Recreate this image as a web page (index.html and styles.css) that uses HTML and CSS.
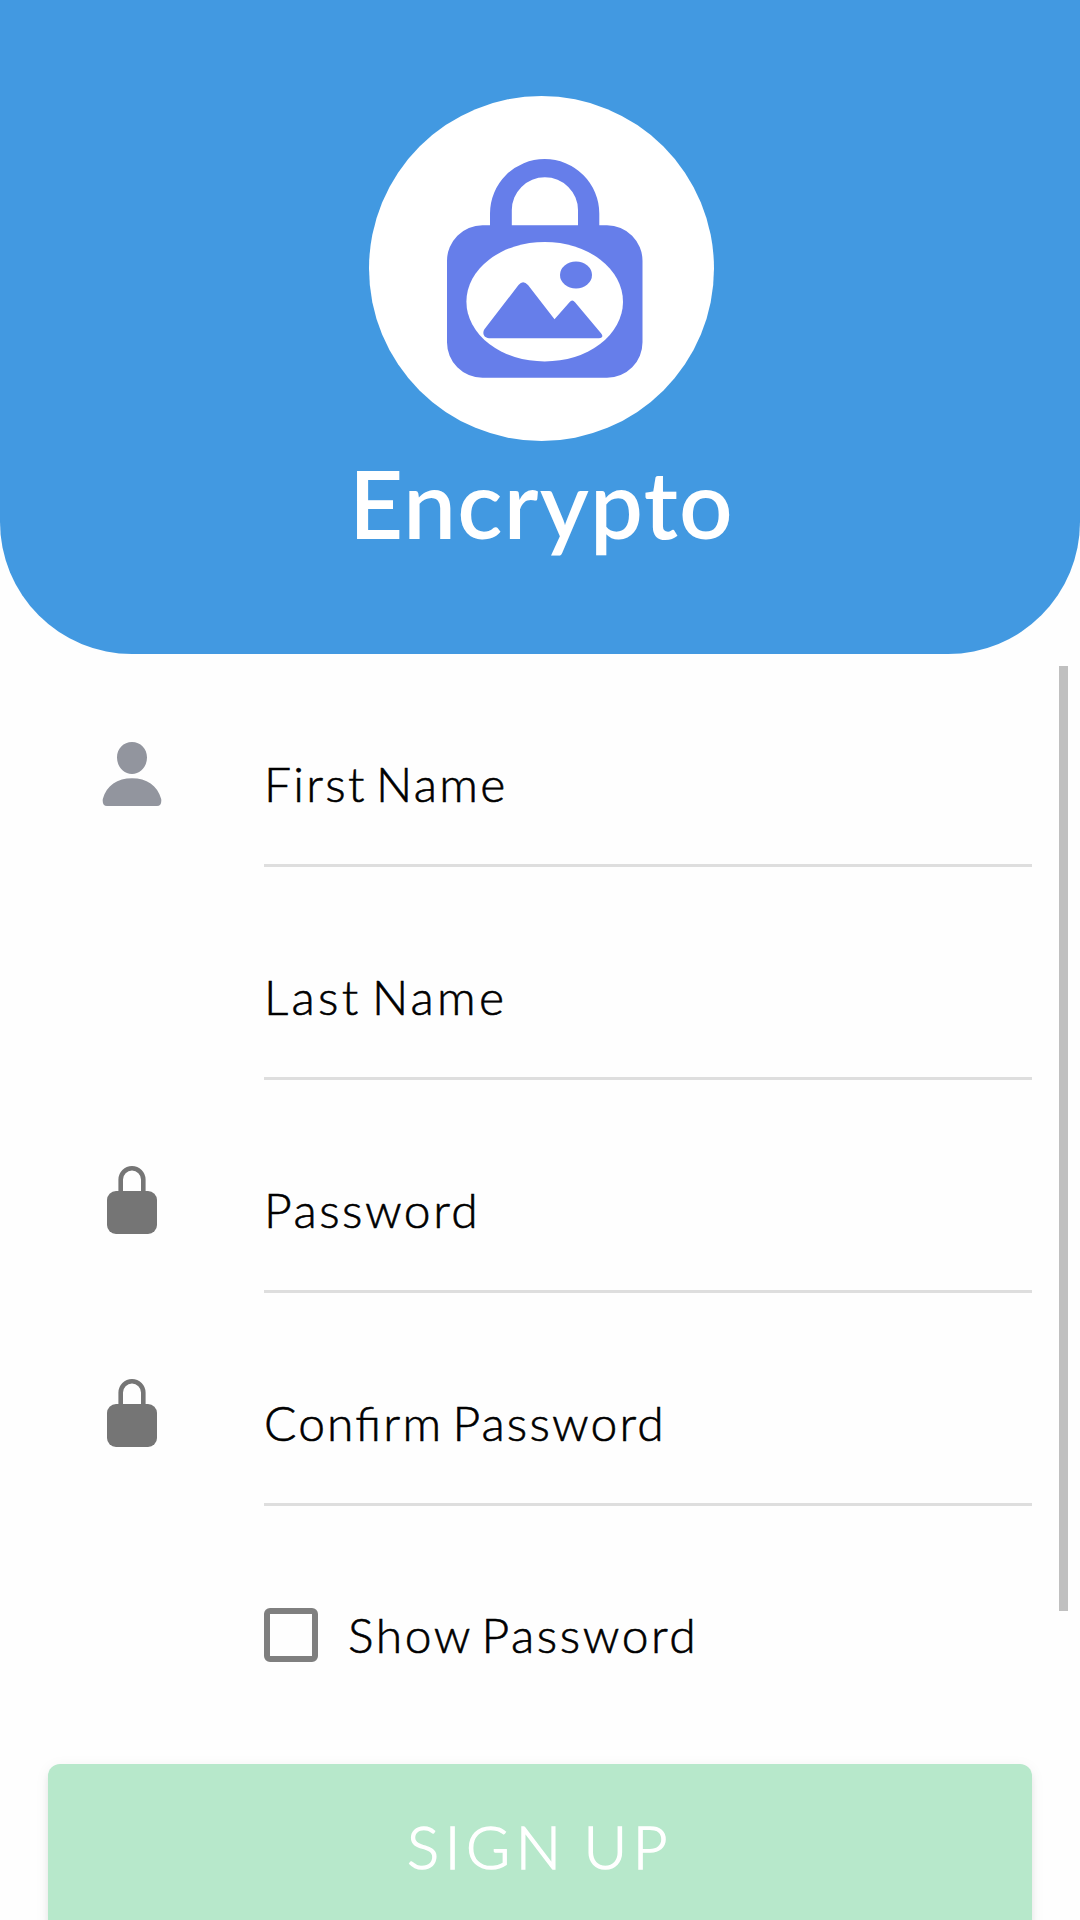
FILE: index.html
```html
<!DOCTYPE html>
<html lang="en">
<head>
<meta charset="utf-8">
<title>Encrypto</title>
<link rel="stylesheet" href="styles.css">
</head>
<body>
<div class="page">
  <header class="hero">
    <svg class="logo" viewBox="0 0 345 345" aria-hidden="true">
      <circle cx="172.5" cy="172.5" r="172.5" fill="#fff"/>
      <path fill="#667eea" fill-rule="evenodd" d="M121 129.3V117.500A54.650 54.500 0 0 1 230.300 117.500V129.300H238A35.500 35.500 0 0 1 273.500 164.800V246A35.500 35.500 0 0 1 238 281.800H113.500A35.500 35.500 0 0 1 78 246V164.800A35.500 35.500 0 0 1 113.500 129.300ZM142.800 129.300H209V114A33.100 32.700 0 0 0 142.800 114Z"/>
      <ellipse cx="175.700" cy="205.700" rx="78.300" ry="59.800" fill="#fff"/>
      <ellipse cx="207" cy="179" rx="16" ry="13.500" fill="#667eea"/>
      <path fill="#667eea" d="M149.500 189Q154 183.500 159 189L185.500 223.200L200.500 206.200Q203.200 203 206 206.200L232 237.200Q235.500 241.300 230 242.200H120C114 242 113 236 116 232.500Z"/>
    </svg>
    <h1 class="brand">Encrypto</h1>
  </header>
  <form class="form">
    <div class="field">
      <svg class="icon" viewBox="0 0 72 72" aria-hidden="true"><path fill="#92959e" d="M36 4C44.500 4 51 10.500 51 19.500C51 28.500 44.500 36 36 36S21 28.500 21 19.500C21 10.500 27.500 4 36 4ZM36 40.300C50.500 40.300 61.500 47.500 65.200 61Q66 68 61 68H11Q6 68 6.800 61C10.500 47.500 21.500 40.300 36 40.300Z"/></svg>
      <span class="label first">First Name</span>
    </div>
    <div class="field">
      <span class="label last">Last Name</span>
    </div>
    <div class="field">
      <svg class="icon" viewBox="0 0 72 72" aria-hidden="true"><rect x="11" y="27" width="50" height="43" rx="9" fill="#757575"/><path d="M24.700 29V15.500a11.300 11.300 0 0 1 22.600 0V29" fill="none" stroke="#757575" stroke-width="4.600"/></svg>
      <span class="label pass">Password</span>
    </div>
    <div class="field">
      <svg class="icon" viewBox="0 0 72 72" aria-hidden="true"><rect x="11" y="27" width="50" height="43" rx="9" fill="#757575"/><path d="M24.700 29V15.500a11.300 11.300 0 0 1 22.600 0V29" fill="none" stroke="#757575" stroke-width="4.600"/></svg>
      <span class="label confirm">Confirm Password</span>
    </div>
    <div class="show">
      <span class="checkbox" role="checkbox" aria-checked="false"></span>
      <span class="show-label">Show Password</span>
    </div>
    <button class="signup" type="button">SIGN UP</button>
  </form>
  <div class="scrollbar"></div>
</div>
</body>
</html>
```
FILE: styles.css
```css
* { box-sizing: border-box; }
body { margin: 0; background: #fefefe; color: #000; font-family: Lato, sans-serif; font-weight: 300; }
.page { position: relative; width: 1080px; height: 1920px; overflow: hidden; }
.hero {
  height: 654px;
  padding: 96px 0 0 3px;
  display: flex;
  flex-direction: column;
  align-items: center;
  background: #4299e1;
  border-radius: 0 0 132px 132px;
}
.logo { width: 345px; height: 345px; flex: none; }
.brand { margin: 2px 0 0; font-size: 94px; line-height: 120px; font-weight: 600; letter-spacing: 1.3px; color: #fff; }
.form { padding: 0 48px; }
.field {
  display: grid;
  grid-template-columns: 168px 1fr;
  height: 213px;
  padding-left: 48px;
}
.icon { width: 72px; height: 72px; margin-top: 84px; }
.label {
  grid-column: 2;
  height: 213px;
  padding-top: 100px;
  border-bottom: 3px solid #dedede;
  font-size: 48px;
  line-height: 60px;
  white-space: nowrap;
}
.label, .show-label { -webkit-text-stroke: .6px #000; font-feature-settings: "liga" 1; word-spacing: -6px; }
.first { letter-spacing: 2.3px; }
.last { letter-spacing: 3.3px; }
.pass { letter-spacing: 2.5px; }
.confirm { letter-spacing: 2.15px; }
.show { display: flex; align-items: flex-start; height: 258px; padding: 102px 0 0 216px; }
.checkbox { width: 54px; height: 54px; border: 6px solid #7f7f7f; border-radius: 6px; }
.show-label { margin: -3px 0 0 30px; font-size: 48px; line-height: 60px; letter-spacing: 2.55px; white-space: nowrap; }
.signup {
  display: block;
  width: 100%;
  height: 168px;
  padding: 0 0 4px;
  border: 0;
  border-radius: 12px;
  background: #b7e8cb;
  box-shadow: 0 9px 3px -6px rgba(0,0,0,.1), 0 6px 6px rgba(0,0,0,.07), 0 3px 15px rgba(0,0,0,.06);
  color: #fff;
  font: 300 60px/164px Lato, sans-serif;
  letter-spacing: 5.6px;
  word-spacing: -5px;
  -webkit-text-stroke: 1.4px #fff;
}
.scrollbar { position: absolute; left: 1059px; top: 666px; width: 9px; height: 945px; background: #c0c0c0; }
```
